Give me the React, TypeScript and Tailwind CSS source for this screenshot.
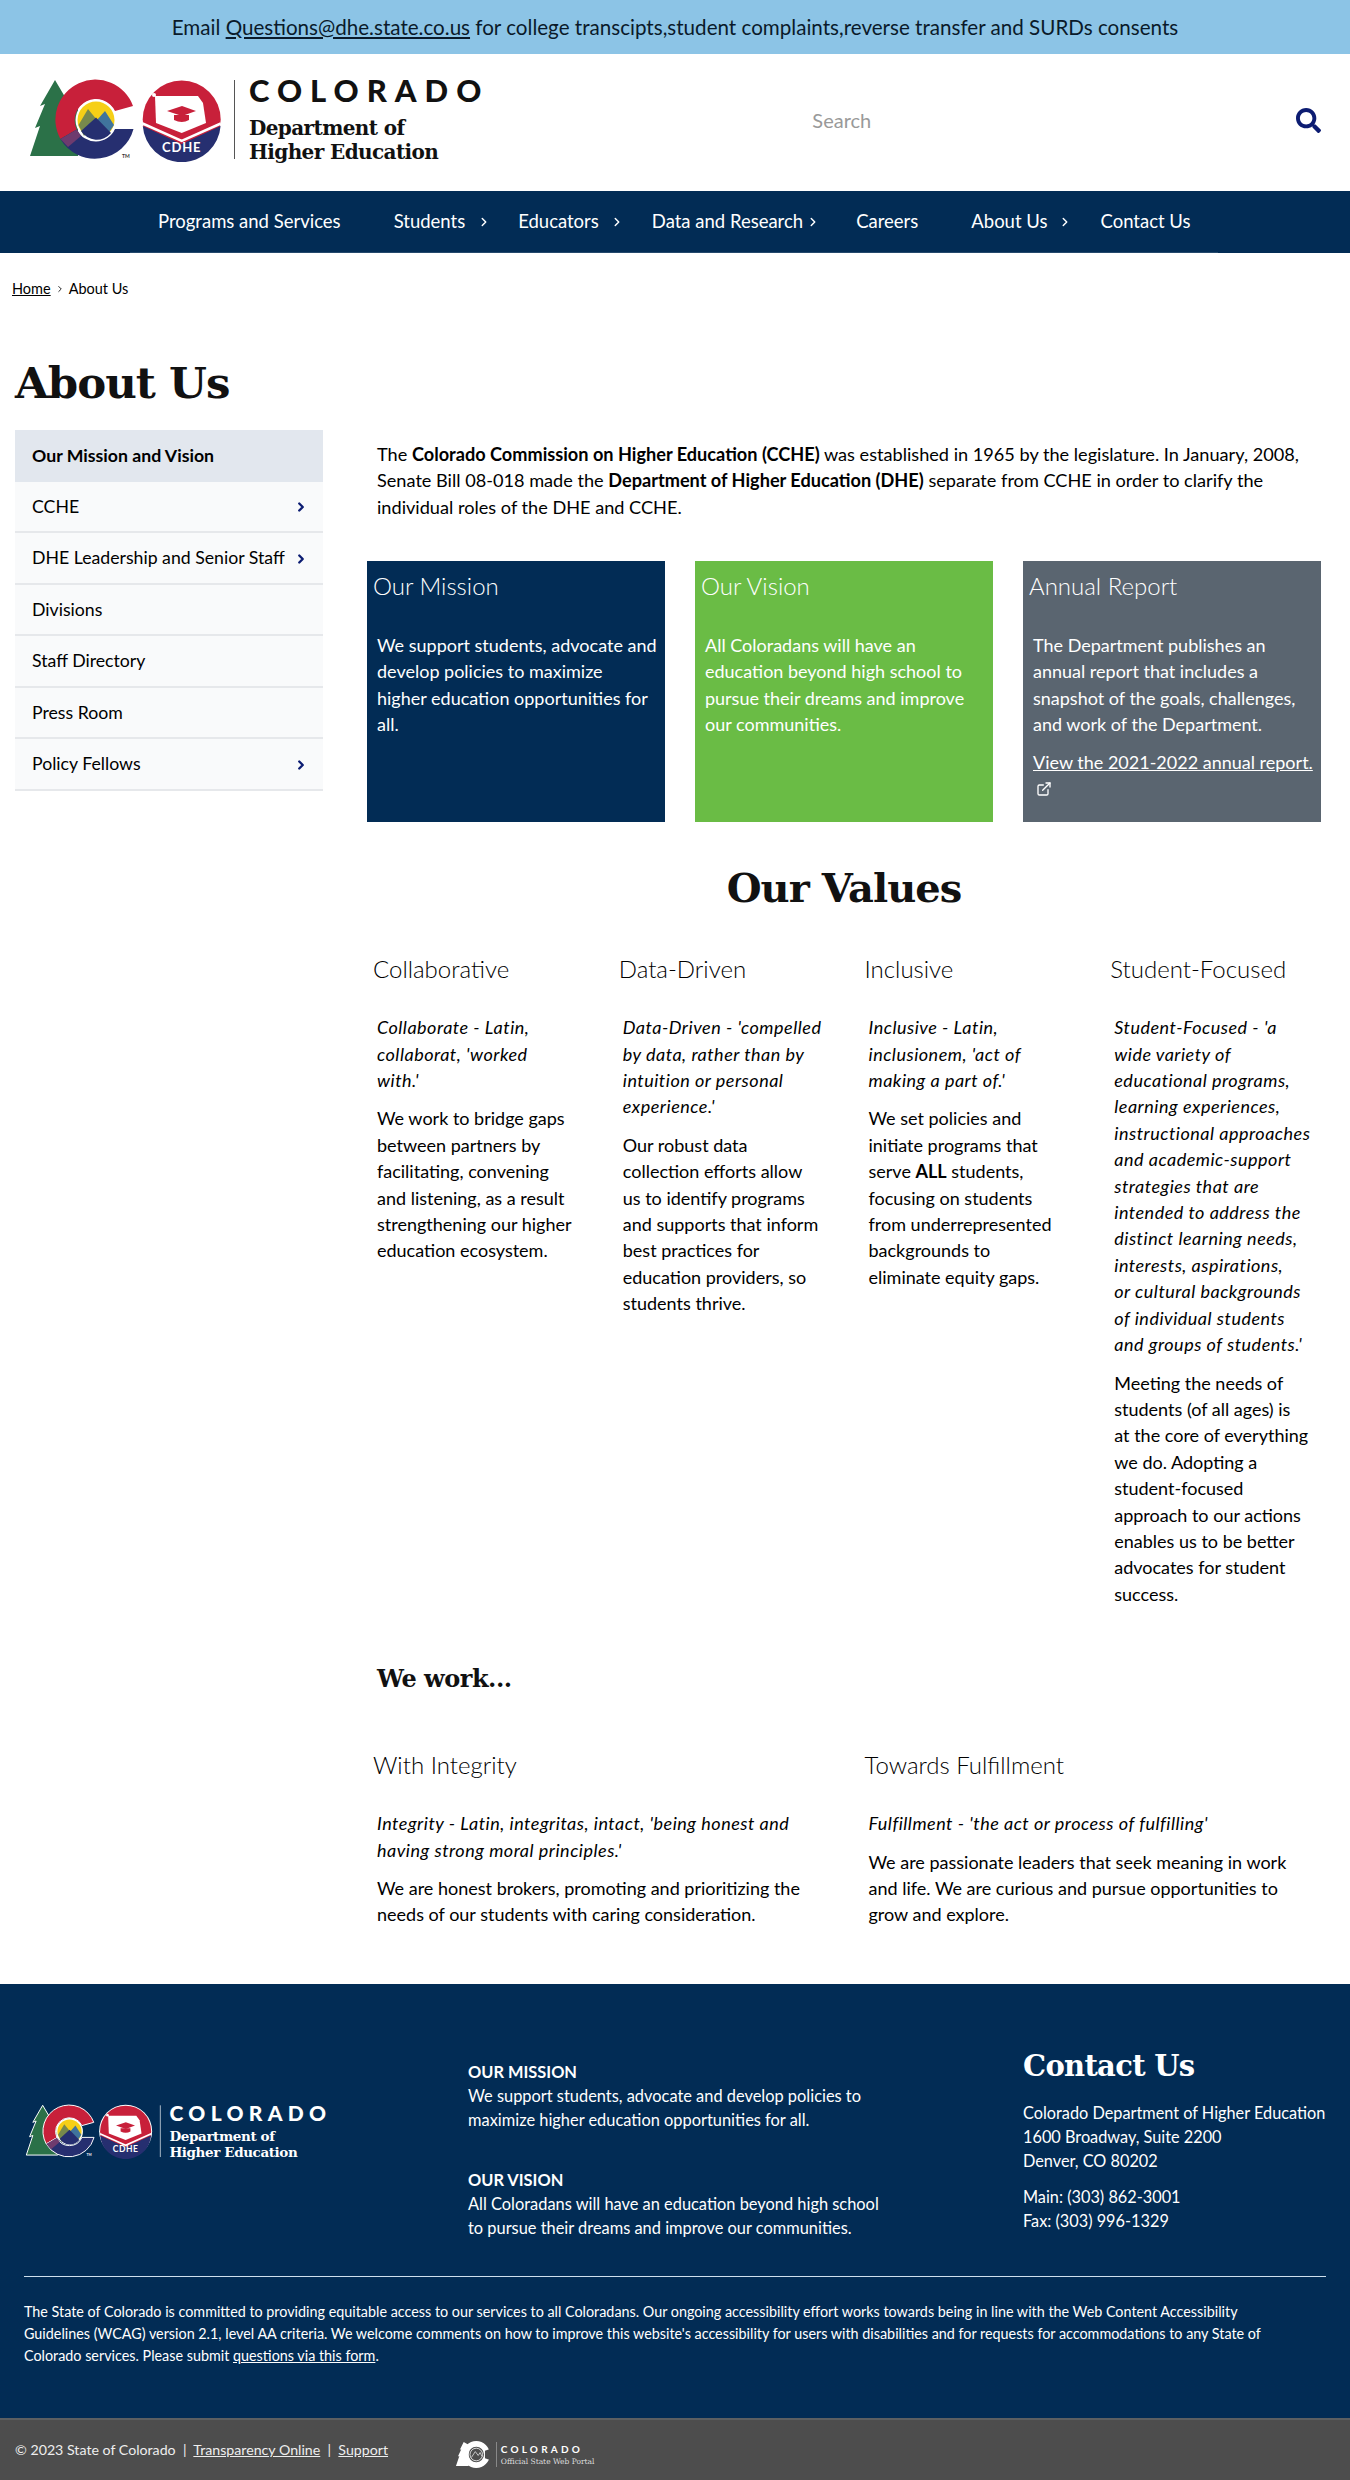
import { ChevronRight, ExternalLink } from 'lucide-react';
import { FaSearch } from 'react-icons/fa';

const navItems = [
  { label: 'Programs and Services' },
  { label: 'Students', arrow: 'ml-[12px] -mr-[26px]' },
  { label: 'Educators', arrow: 'ml-[11px] -mr-[25px]' },
  { label: 'Data and Research', arrow: 'ml-[3px] -mr-[17px]' },
  { label: 'Careers' },
  { label: 'About Us', arrow: 'ml-[11px] -mr-[25px]' },
  { label: 'Contact Us' },
];

const sideItems = [
  { label: 'Our Mission and Vision', active: true },
  { label: 'CCHE', arrow: true },
  { label: 'DHE Leadership and Senior Staff', arrow: true },
  { label: 'Divisions' },
  { label: 'Staff Directory' },
  { label: 'Press Room' },
  { label: 'Policy Fellows', arrow: true },
];

const values = [
  {
    title: 'Collaborative',
    quote: "Collaborate - Latin,\ncollaborat, 'worked\nwith.'",
    body: 'We work to bridge gaps\nbetween partners by\nfacilitating, convening\nand listening, as a result\nstrengthening our higher\neducation ecosystem.',
  },
  {
    title: 'Data-Driven',
    quote: "Data-Driven - 'compelled\nby data, rather than by\nintuition or personal\nexperience.'",
    body: 'Our robust data\ncollection efforts allow\nus to identify programs\nand supports that inform\nbest practices for\neducation providers, so\nstudents thrive.',
  },
  {
    title: 'Inclusive',
    quote: "Inclusive - Latin,\ninclusionem, 'act of\nmaking a part of.'",
    body: (
      <>
        We set policies and
        <br />
        initiate programs that
        <br />
        serve <b>ALL</b> students,
        <br />
        focusing on students
        <br />
        from underrepresented
        <br />
        backgrounds to
        <br />
        eliminate equity gaps.
      </>
    ),
  },
  {
    title: 'Student-Focused',
    quote:
      "Student-Focused - 'a\nwide variety of\neducational programs,\nlearning experiences,\ninstructional approaches\nand academic-support\nstrategies that are\nintended to address the\ndistinct learning needs,\ninterests, aspirations,\nor cultural backgrounds\nof individual students\nand groups of students.'",
    body: 'Meeting the needs of\nstudents (of all ages) is\nat the core of everything\nwe do. Adopting a\nstudent-focused\napproach to our actions\nenables us to be better\nadvocates for student\nsuccess.',
  },
];

function LogoMark({ dark }: { dark?: boolean }) {
  const ring = dark ? '#ffffff' : 'none';
  return (
    <svg viewBox="0 0 210 84" className="h-full w-auto shrink-0">
      <path d="M27 2 L12 28 L17 26 L7 50 L12 48 L2 78 L50 78 L50 20 L40 24 Z" fill="#2b7148" stroke={ring} strokeWidth="1.5" />
      <path d="M32.4 61 A40 40 0 1 1 105 28 L87 33 A21 21 0 1 0 48.8 51.5 Z" fill="#c8203a" stroke={ring} strokeWidth="1.5" />
      <path d="M32.4 61 A40 40 0 0 0 105.5 51 L87 51 A21 21 0 0 1 48.8 51.5 Z" fill="#262f70" stroke={ring} strokeWidth="1.5" />
      <path d="M32.4 61 L48.8 51.5 L53 58 L40 69 Z" fill="#6e3b6e" />
      <circle cx="68" cy="42" r="20.5" fill="#ffffff" />
      <circle cx="68" cy="42" r="18.5" fill="#f6cf16" />
      <path d="M50.5 47 L60 31 L69 42 L56 58 Z" fill="#77894c" />
      <path d="M69 42 L77 33 L86 47 L80 56 Z" fill="#40749c" />
      <path d="M68 39.5 L83 55 A18.5 18.5 0 0 1 53 53 Z" fill="#262f70" />
      <text x="94" y="80" fontSize="5" fontWeight="700" fill={dark ? '#ffffff' : '#333333'} fontFamily="Lato, sans-serif">TM</text>
      {dark && <circle cx="153.7" cy="41.5" r="40.5" fill="#ffffff" />}
      <circle cx="153.7" cy="41.5" r="39" fill="#c8203a" />
      <path d="M114.8 48 L153.7 66 L192.6 48 A39 39 0 0 1 114.8 48 Z" fill="#262f70" />
      <path d="M114.6 45.5 L153.7 63 L192.8 45.5" fill="none" stroke="#ffffff" strokeWidth="2.5" />
      <path d="M127 18 L170 18 L175 25 L178 45 L153.7 55 L128 45 Z" fill="#ffffff" />
      <circle cx="126" cy="17" r="2" fill="#ffffff" />
      <path d="M139 33 L154 28 L168 33 L154 38 Z" fill="#c8203a" />
      <path d="M146 37 L161 37 L161 42 Q154 46 146 42 Z" fill="#c8203a" />
      <text x="153.7" y="74" fontSize="13" fontWeight="700" letterSpacing="0.8" textAnchor="middle" fill="#ffffff" fontFamily="Lato, sans-serif">CDHE</text>
      <rect x="206" y="2" width="1" height="79" fill={dark ? '#ffffff' : '#555555'} />
    </svg>
  );
}

function StateMark() {
  return (
    <svg viewBox="0 0 37 30" className="h-[29px] w-auto shrink-0">
      <path d="M9 2 L5 10 L6.5 9.5 L3 17 L4.5 16.5 L1 27 L14 27 L14 5 Z" fill="#ffffff" />
      <circle cx="22" cy="15" r="11" fill="none" stroke="#ffffff" strokeWidth="6" />
      <path d="M31 11 L37 9 L37 21 L31 19 Z" fill="#4d4d4d" />
      <circle cx="22" cy="15" r="6.5" fill="#4d4d4d" stroke="#ffffff" strokeWidth="0.8" />
      <path d="M17 18 L21 12 L24 16 L26 13 L28 17" fill="none" stroke="#ffffff" strokeWidth="0.7" />
    </svg>
  );
}

function SubTitle({ children }: { children: string }) {
  return <h3 className="pl-[6px] text-[24px] leading-[32px] font-light">{children}</h3>;
}

export default function App() {
  return (
    <div className="w-[1350px] h-[2480px] overflow-hidden bg-white text-black font-['Lato',sans-serif] text-[18px]">
      <div className="h-[54px] bg-[#8cc4e6] flex items-center justify-center text-[20.6px] text-[#0a1a2a]">
        <p>
          Email <a className="underline">Questions@dhe.state.co.us</a> for college transcipts,student complaints,reverse transfer and SURDs consents
        </p>
      </div>

      <header className="h-[137px] pb-[5px] flex items-center">
        <div className="ml-[28px] flex h-[84px] items-center">
          <LogoMark />
          <div className="ml-[11px] -mt-[2px] flex flex-col">
            <span className="font-black text-[31px] leading-[30px] tracking-[8px] text-[#111]">COLORADO</span>
            <span className="mt-[11px] font-['DejaVu_Serif',serif] font-bold text-[20px] leading-[24px] text-[#111] tracking-[-0.6px]">
              Department of
              <br />
              Higher Education
            </span>
          </div>
        </div>
        <span className="ml-[323px] text-[20px] text-[#999]">Search</span>
        <FaSearch className="ml-auto mr-[29px] text-[#0c1c72]" size={25} />
      </header>

      <nav className="h-[62px] bg-[#022c55]">
        <div className="ml-[130px] w-[1088px] h-full pl-[28px] flex items-center gap-[53px] border-b border-[#24496c] text-white text-[18.5px]">
          {navItems.map((item) => (
            <span key={item.label} className="flex items-center">
              {item.label}
              {item.arrow && <ChevronRight size={14} strokeWidth={2.5} className={item.arrow} />}
            </span>
          ))}
        </div>
      </nav>

      <div className="mt-[26px] ml-[12px] h-[20px] flex items-center text-[14.5px] leading-[20px]">
        <a className="underline">Home</a>
        <ChevronRight size={10} strokeWidth={2} className="mx-[4px]" />
        <span>About Us</span>
      </div>

      <h1 className="mt-[54px] ml-[15px] font-['DejaVu_Serif',serif] font-bold text-[43.5px] leading-[60px] tracking-[-1px] text-[#111]">About Us</h1>

      <div className="mt-[17px] h-[1554px] flex">
        <aside className="ml-[15px] w-[308px] shrink-0">
          {sideItems.map((item) => (
            <div
              key={item.label}
              className={`h-[51.5px] pt-[2px] pl-[17px] pr-[15px] flex items-center justify-between text-[17.7px] ${item.active ? 'bg-[#e2e7ee] font-bold' : 'bg-[#f9fafb] border-b-2 border-[#e6e8eb]'}`}
            >
              <span>{item.label}</span>
              {item.arrow && <ChevronRight size={14} strokeWidth={4} className="text-[#0c1c72]" />}
            </div>
          ))}
        </aside>

        <main className="ml-[44px] w-[983px] shrink-0">
          <p className="mt-[11px] pl-[10px] w-[954px] pr-[10px] text-[18.15px] leading-[26.4px]">
            The <b>Colorado Commission on Higher Education (CCHE)</b> was established in 1965 by the legislature. In January, 2008, Senate Bill 08-018 made the <b>Department of Higher Education (DHE)</b> separate from CCHE in order to clarify the individual roles of the DHE and CCHE.
          </p>

          <div className="mt-[41px] w-[954px] grid grid-cols-3 gap-x-[30px] text-white">
            <div className="h-[261px] bg-[#022c55] pt-[9px]">
              <SubTitle>Our Mission</SubTitle>
              <p className="mt-[30px] pl-[10px] leading-[26.2px] whitespace-pre-line">{'We support students, advocate and\ndevelop policies to maximize\nhigher education opportunities for\nall.'}</p>
            </div>
            <div className="h-[261px] bg-[#6abc45] pt-[9px]">
              <SubTitle>Our Vision</SubTitle>
              <p className="mt-[30px] pl-[10px] leading-[26.2px] whitespace-pre-line">{'All Coloradans will have an\neducation beyond high school to\npursue their dreams and improve\nour communities.'}</p>
            </div>
            <div className="h-[261px] bg-[#5a6570] pt-[9px]">
              <SubTitle>Annual Report</SubTitle>
              <p className="mt-[30px] pl-[10px] leading-[26.2px] whitespace-pre-line">{'The Department publishes an\nannual report that includes a\nsnapshot of the goals, challenges,\nand work of the Department.'}</p>
              <p className="mt-[12px] pl-[10px] leading-[26.2px] whitespace-nowrap">
                <a className="underline">View the 2021-2022 annual report.</a>
                <ExternalLink size={16} className="mt-[6px] ml-[3px]" />
              </p>
            </div>
          </div>

          <h2 className="mt-[38px] w-[954px] text-center font-['DejaVu_Serif',serif] font-bold text-[40px] leading-[56px] tracking-[-1px] text-[#111]">Our Values</h2>

          <div className="mt-[37px] grid grid-cols-4 leading-[26.4px]">
            {values.map((value) => (
              <div key={value.title}>
                <SubTitle>{value.title}</SubTitle>
                <div className="mt-[29px] pl-[10px] whitespace-pre-line">
                  <p className="italic tracking-[0.5px]">{value.quote}</p>
                  <p className="mt-[12px]">{value.body}</p>
                </div>
              </div>
            ))}
          </div>

          <h3 className="mt-[54px] pl-[10px] font-['DejaVu_Serif',serif] font-bold text-[24px] leading-[36px] tracking-[-0.5px] text-[#111]">We work...</h3>

          <div className="mt-[52px] grid grid-cols-2 leading-[26.4px]">
            <div>
              <SubTitle>With Integrity</SubTitle>
              <div className="mt-[29px] pl-[10px] whitespace-pre-line">
                <p className="italic tracking-[0.5px]">{"Integrity - Latin, integritas, intact, 'being honest and\nhaving strong moral principles.'"}</p>
                <p className="mt-[12px]">{'We are honest brokers, promoting and prioritizing the\nneeds of our students with caring consideration.'}</p>
              </div>
            </div>
            <div>
              <SubTitle>Towards Fulfillment</SubTitle>
              <div className="mt-[29px] pl-[10px] whitespace-pre-line">
                <p className="italic tracking-[0.5px]">{"Fulfillment - 'the act or process of fulfilling'"}</p>
                <p className="mt-[12px]">{'We are passionate leaders that seek meaning in work\nand life. We are curious and pursue opportunities to\ngrow and explore.'}</p>
              </div>
            </div>
          </div>
        </main>
      </div>

      <footer className="h-[496px] bg-[#022c55] text-white flex flex-col">
        <div className="h-[292px] flex shrink-0">
          <div className="ml-[25px] mt-[120px] w-[443px] shrink-0">
            <div className="flex h-[55px] items-center">
              <LogoMark dark />
              <div className="ml-[7px] flex flex-col">
                <span className="font-black text-[21px] leading-[20px] tracking-[5.3px]">COLORADO</span>
                <span className="mt-[5px] font-['DejaVu_Serif',serif] font-bold text-[13.5px] leading-[16px] tracking-[-0.4px]">
                  Department of
                  <br />
                  Higher Education
                </span>
              </div>
            </div>
          </div>
          <div className="mt-[76px] w-[555px] shrink-0 text-[16.4px] leading-[24px]">
            <p className="font-bold">OUR MISSION</p>
            <p>
              We support students, advocate and develop policies to
              <br />
              maximize higher education opportunities for all.
            </p>
            <p className="mt-[36px] font-bold">OUR VISION</p>
            <p>
              All Coloradans will have an education beyond high school
              <br />
              to pursue their dreams and improve our communities.
            </p>
          </div>
          <div className="mt-[62px] text-[16.3px] leading-[24px]">
            <h3 className="font-['DejaVu_Serif',serif] font-bold text-[29px] leading-[40px] tracking-[-0.7px]">Contact Us</h3>
            <p className="mt-[15px]">
              Colorado Department of Higher Education
              <br />
              1600 Broadway, Suite 2200
              <br />
              Denver, CO 80202
            </p>
            <p className="mt-[12px]">
              Main: (303) 862-3001
              <br />
              Fax: (303) 996-1329
            </p>
          </div>
        </div>
        <hr className="mx-[24px] border-t border-[#cfe0ee]" />
        <p className="mt-[24px] mx-[24px] text-[14.35px] leading-[22px] whitespace-nowrap">
          The State of Colorado is committed to providing equitable access to our services to all Coloradans. Our ongoing accessibility effort works towards being in line with the Web Content Accessibility
          <br />
          Guidelines (WCAG) version 2.1, level AA criteria. We welcome comments on how to improve this website's accessibility for users with disabilities and for requests for accommodations to any State of
          <br />
          Colorado services. Please submit <a className="underline">questions via this form</a>.
        </p>
        <div className="mt-auto h-[62px] bg-[#4d4d4d] border-t-2 border-[#5c5f62] flex items-center text-[14.2px] text-[#eeeeee]">
          <p className="ml-[15px] w-[440px] shrink-0 -mt-[1px]">
            © 2023 State of Colorado &nbsp;|&nbsp; <a className="underline">Transparency Online</a> &nbsp;|&nbsp; <a className="underline">Support</a>
          </p>
          <div className="mt-[8px] flex items-center">
            <StateMark />
            <div className="ml-[5px] pl-[4px] border-l border-[#888888] flex flex-col">
              <span className="font-bold text-[10px] leading-[14px] tracking-[3.2px] text-white">COLORADO</span>
              <span className="text-[7.5px] leading-[11px] text-[#dddddd] font-['DejaVu_Serif',serif]">Official State Web Portal</span>
            </div>
          </div>
        </div>
      </footer>
    </div>
  );
}
